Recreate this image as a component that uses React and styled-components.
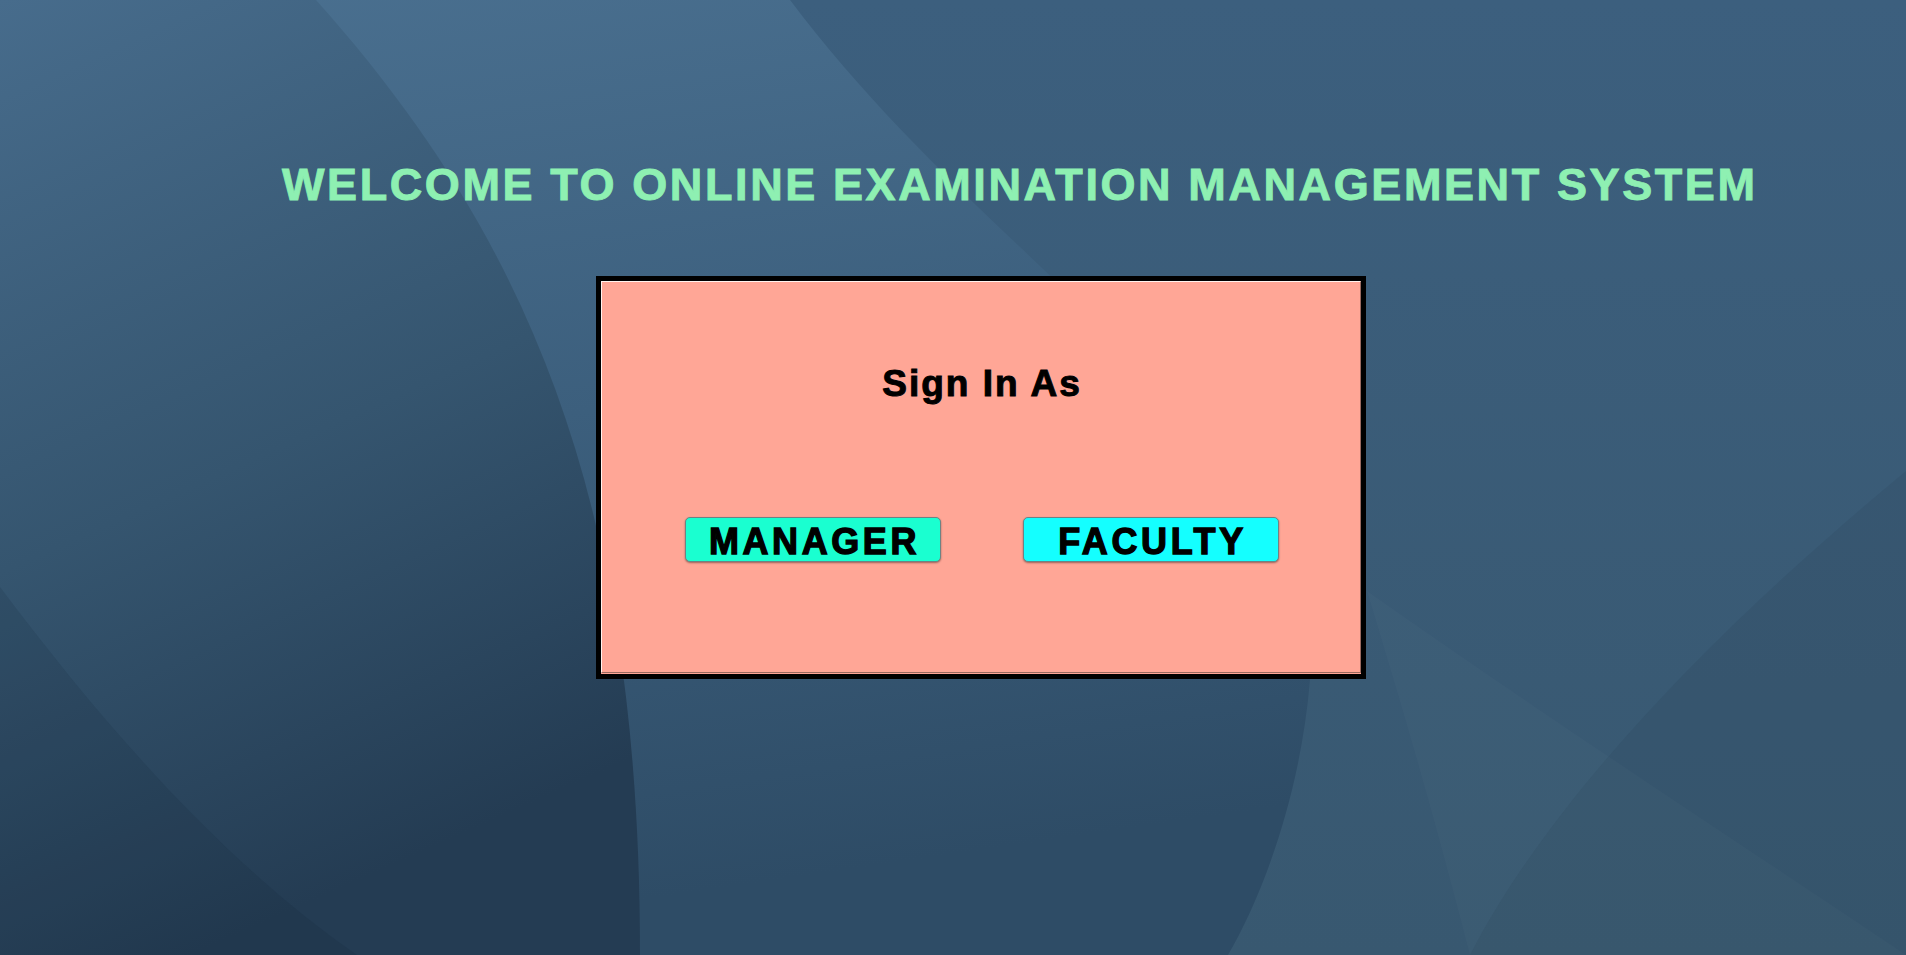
import React from 'react'
import styled, { createGlobalStyle } from 'styled-components'

const GlobalStyle = createGlobalStyle`
  html, body {
    margin: 0;
    padding: 0;
    background: #3a5b77;
  }
  * {
    box-sizing: border-box;
  }
`

const Page = styled.div`
  position: relative;
  width: 100%;
  min-height: 955px;
  overflow: hidden;
  font-family: 'Liberation Sans', Arial, sans-serif;
`

const Backdrop = styled.svg`
  position: absolute;
  inset: 0;
  width: 100%;
  height: 100%;
  z-index: 0;
`

const Content = styled.div`
  position: relative;
  z-index: 1;
  display: flex;
  flex-direction: column;
  align-items: flex-start;
  padding-top: 162px;
`

const Title = styled.h1`
  margin: 0 0 0 282px;
  font-size: 45px;
  line-height: 1;
  font-weight: bold;
  letter-spacing: 2.6px;
  color: #8ef0b2;
  -webkit-text-stroke: 0.9px #8ef0b2;
  white-space: nowrap;
`

const Frame = styled.div`
  margin: 69px 0 0 596px;
  width: 770px;
  height: 403px;
  border: 5px solid #000;
  background: #ffa696;
  padding-bottom: 1px;
  display: flex;
`

const Panel = styled.div`
  flex: 1;
  display: flex;
  flex-direction: column;
  align-items: center;
  padding: 83px 0 0 0;
  border-style: solid;
  border-width: 1px;
  border-color: #fff3ef #9a6a60 #9a6a60 #fff3ef;
  background: #ffa696;
`

const Heading = styled.div`
  font-size: 37px;
  line-height: 1;
  font-weight: bold;
  letter-spacing: 2px;
  color: #000;
  -webkit-text-stroke: 1px #000;
  padding-left: 2px;
`

const ButtonRow = styled.div`
  display: flex;
  gap: 82px;
  margin-top: 115px;
  padding-left: 1px;
`

const RoleButton = styled.button`
  width: 256px;
  height: 45px;
  padding: 4px 0 0 4px;
  display: flex;
  align-items: center;
  justify-content: center;
  border: 1px solid #6f8283;
  border-radius: 5px;
  background: ${props => props.color};
  box-shadow: 0 1px 2px rgba(0, 0, 0, 0.4);
  font-family: 'Liberation Sans', Arial, sans-serif;
  font-size: 36px;
  line-height: 1;
  font-weight: bold;
  letter-spacing: 3.6px;
  color: #000;
  -webkit-text-stroke: 1.3px #000;
  cursor: pointer;
`

const Background = () => (
  <Backdrop viewBox="0 0 1906 955" preserveAspectRatio="none">
    <defs>
      <linearGradient id="leftSide" x1="0" y1="0" x2="0.3" y2="1">
        <stop offset="0" stopColor="#476c8c" />
        <stop offset="0.55" stopColor="#35556f" />
        <stop offset="1" stopColor="#243c53" />
      </linearGradient>
      <linearGradient id="band" x1="0" y1="0" x2="0.2" y2="1">
        <stop offset="0" stopColor="#4a7090" />
        <stop offset="0.5" stopColor="#3c5f7d" />
        <stop offset="1" stopColor="#2e4c66" />
      </linearGradient>
      <linearGradient id="rightSide" x1="0" y1="0" x2="0" y2="1">
        <stop offset="0" stopColor="#3c5f7e" />
        <stop offset="1" stopColor="#385870" />
      </linearGradient>
    </defs>
    <rect x="0" y="0" width="1906" height="955" fill="url(#rightSide)" />
    <path
      d="M790,0 C1000,280 1330,450 1310,680 C1300,800 1260,900 1228,955 L0,955 L0,0 Z"
      fill="url(#band)"
    />
    <path d="M0,0 L316,0 C540,250 640,520 640,955 L0,955 Z" fill="url(#leftSide)" />
    <path d="M0,587 C100,720 220,860 357,955 L0,955 Z" fill="rgba(20,35,50,0.12)" />
    <path d="M1906,471 C1750,600 1560,780 1470,955 L1906,955 Z" fill="rgba(20,35,50,0.08)" />
    <path d="M1367,591 C1550,720 1750,850 1906,955 L1470,955 C1430,800 1400,700 1367,591 Z" fill="rgba(255,255,255,0.02)" />
  </Backdrop>
)

export default function App() {
  return (
    <Page>
      <GlobalStyle />
      <Background />
      <Content>
        <Title>WELCOME TO ONLINE EXAMINATION MANAGEMENT SYSTEM</Title>
        <Frame>
          <Panel>
            <Heading>Sign In As</Heading>
            <ButtonRow>
              <RoleButton color="#1affd0">MANAGER</RoleButton>
              <RoleButton color="#14ffff">FACULTY</RoleButton>
            </ButtonRow>
          </Panel>
        </Frame>
      </Content>
    </Page>
  )
}
